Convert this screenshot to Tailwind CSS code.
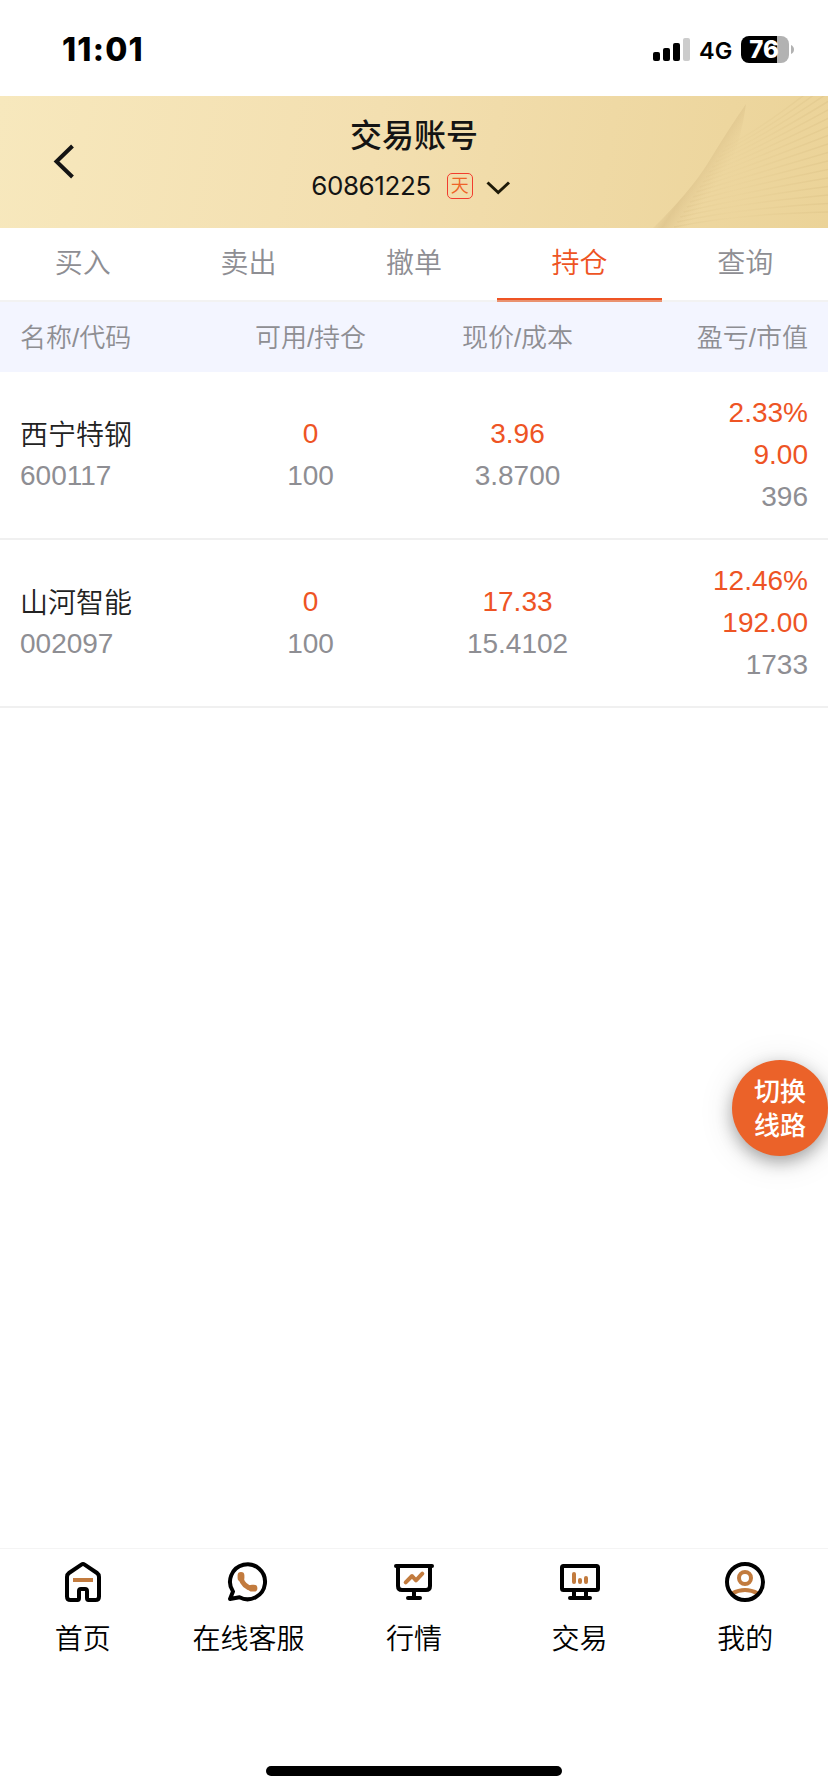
<!DOCTYPE html>
<html lang="zh-CN">
<head>
    <meta charset="UTF-8">
    <meta name="viewport" content="width=device-width, initial-scale=1.0">
    <title>交易账号</title>
    <script src="https://cdn.jsdelivr.net/npm/@tailwindcss/browser@4"></script>
</head>
<body class="bg-white">
<div class="relative flex flex-col w-[828px] h-[1792px] overflow-hidden bg-white text-[28px] leading-[42px] font-[350] text-[#8e8e93] font-['Liberation_Sans','Noto_Sans_CJK_SC',sans-serif]">

    <!-- status bar -->
    <div class="flex items-start justify-between h-24 shrink-0 pl-[62px] pr-[34px] text-black font-['Inter',sans-serif]">
        <span class="mt-[30px] text-[32px] leading-10 font-extrabold tracking-[1.2px]">11:01</span>
        <div class="flex items-center h-[27px] mt-9">
            <svg class="w-[37px] h-[23px]" viewBox="0 0 37 23">
                <rect x="0" y="14" width="7" height="9" rx="2"/>
                <rect x="10" y="10" width="7" height="13" rx="2"/>
                <rect x="20" y="5" width="7" height="18" rx="2"/>
                <rect x="30" y="0" width="7" height="23" rx="2" fill="#ccc"/>
            </svg>
            <span class="w-[33px] ml-[9px] mt-0.5 text-[23.5px] leading-7 font-semibold whitespace-nowrap">4G</span>
            <div class="flex items-center justify-center w-12 h-[27px] ml-[9px] rounded-lg bg-linear-to-r from-black from-75% to-[#b2b2b2] to-75% text-white text-2xl leading-[27px] font-extrabold pr-0.5">76</div>
            <svg class="w-[3px] h-[9px] ml-0.5" viewBox="0 0 3 9"><path d="M0 0Q3 1.5 3 4.500T0 9z" fill="#b2b2b2"/></svg>
        </div>
    </div>

    <!-- account header -->
    <header class="relative h-[132px] shrink-0 bg-linear-[100deg] from-[#f7e8bd] via-[#f3dfb0] via-45% to-[#ebd398] text-[#141414]">
        <svg class="absolute inset-0 w-full h-full" viewBox="0 0 828 132" fill="none">
            <defs>
                <linearGradient id="fold" x1="688" y1="58" x2="722" y2="80" gradientUnits="userSpaceOnUse">
                    <stop offset="0.15" stop-color="#d2b780" stop-opacity="0"/>
                    <stop offset="0.45" stop-color="#cdb17a" stop-opacity=".38"/>
                    <stop offset="1" stop-color="#e2c68c" stop-opacity="0"/>
                </linearGradient>
                <linearGradient id="ray" x1="670" y1="0" x2="828" y2="0" gradientUnits="userSpaceOnUse">
                    <stop offset="0" stop-color="#d3b87c" stop-opacity=".25"/>
                    <stop offset=".4" stop-color="#d8bd80" stop-opacity=".06"/>
                    <stop offset="1" stop-color="#d3b87c" stop-opacity=".3"/>
                </linearGradient>
            </defs>
            <path d="M746 8Q728 34 708 67Q690 96 653 132H700Q738 70 746 8z" fill="url(#fold)"/>
            <g id="rays" stroke="url(#ray)" stroke-width="1.500"></g>
        </svg>
        <svg class="absolute left-[52px] top-[46px] w-6 h-10" viewBox="0 0 24 40" fill="none" stroke="#141414" stroke-width="4"><path d="M20.500 4 4.500 19.500 20.500 35"/></svg>
        <div class="relative flex flex-col items-center pt-4">
            <h1 class="text-[32px] leading-[48px] font-medium">交易账号</h1>
            <div class="flex items-center mt-[5px] h-[42px] mr-[7px]">
                <span class="text-[26px] font-normal font-['Inter',sans-serif] tracking-[-0.4px]">60861225</span>
                <span class="flex items-center justify-center w-[26px] h-[26px] ml-4 rounded-[5px] border border-[#f23c2e] text-[18px] leading-none text-[#ee6328]">天</span>
                <svg class="w-6 h-4 ml-[13px] mt-1" viewBox="0 0 24 16" fill="none" stroke="#1e1a08" stroke-width="3"><path d="M1.500 2.500 12.200 12.500 23 2.500"/></svg>
            </div>
        </div>
    </header>

    <!-- tabs -->
    <nav class="grid grid-cols-5 h-[74px] shrink-0 border-b-2 border-[#f2f2f2] text-center leading-[72px]">
        <a>买入</a>
        <a>卖出</a>
        <a>撤单</a>
        <a class="relative text-[#ee5424]">持仓<i class="absolute left-0 -bottom-0.5 w-full h-1 bg-[#ee5424] border-b-2 border-[#ea9270]"></i></a>
        <a>查询</a>
    </nav>

    <!-- positions -->
    <div class="grid grid-cols-4 items-center h-[70px] shrink-0 pt-px bg-[#f3f5ff] text-[26px]">
        <span class="pl-5">名称/代码</span>
        <span class="text-center">可用/持仓</span>
        <span class="text-center">现价/成本</span>
        <span class="pr-5 text-right">盈亏/市值</span>
    </div>
    <div class="grid grid-cols-4 items-center h-[168px] shrink-0 border-b-2 border-[#f0f0f0]">
        <div class="pl-5"><p class="pt-0.5 -mb-0.5 text-[#222]">西宁特钢</p><p>600117</p></div>
        <div class="text-center"><p class="text-[#ee5424]">0</p><p>100</p></div>
        <div class="text-center"><p class="text-[#ee5424]">3.96</p><p>3.8700</p></div>
        <div class="pr-5 text-right"><p class="text-[#ee5424]">2.33%</p><p class="text-[#ee5424]">9.00</p><p>396</p></div>
    </div>
    <div class="grid grid-cols-4 items-center h-[168px] shrink-0 border-b-2 border-[#f0f0f0]">
        <div class="pl-5"><p class="pt-0.5 -mb-0.5 text-[#222]">山河智能</p><p>002097</p></div>
        <div class="text-center"><p class="text-[#ee5424]">0</p><p>100</p></div>
        <div class="text-center"><p class="text-[#ee5424]">17.33</p><p>15.4102</p></div>
        <div class="pr-5 text-right"><p class="text-[#ee5424]">12.46%</p><p class="text-[#ee5424]">192.00</p><p>1733</p></div>
    </div>

    <!-- floating line switch -->
    <button class="absolute right-0 top-[1060px] flex flex-col items-center justify-center w-24 h-24 pt-0.5 rounded-full bg-[#eb6229] text-white text-[26px] leading-[34px] font-medium shadow-[0_6px_16px_rgba(0,0,0,0.3),0_4px_36px_rgba(0,0,0,0.12)]">
        <span>切换</span>
        <span>线路</span>
    </button>

    <!-- bottom bar -->
    <footer class="grid grid-cols-5 h-[244px] shrink-0 mt-auto pt-[9px] border-t border-[#f4f4f4] text-black text-center">
        <div class="flex flex-col items-center">
            <svg class="w-12 h-12" viewBox="0 0 48 48" fill="none" stroke="#000" stroke-width="4" stroke-linejoin="round">
                <path d="M22.400 6.600 10 15Q8 16.400 8 19V38.500Q8 42 11.500 42H18.500Q20 42 20 40V33Q20 31 22 31H26Q28 31 28 33V40Q28 42 29.500 42H36.500Q40 42 40 38.500V19Q40 16.400 38 15L25.600 6.600Q24 5.500 22.400 6.600z"/>
                <path d="M14 22H34" stroke="#c27b3e"/>
            </svg>
            <span class="mt-[13px]">首页</span>
        </div>
        <div class="flex flex-col items-center">
            <svg class="w-12 h-12" viewBox="0 0 48 48" fill="none" stroke="#000" stroke-width="4" stroke-linecap="round" stroke-linejoin="round">
                <path d="M9 33.500A17.500 17.500 0 1 1 15.500 39.300L6 41z"/>
                <g stroke="#c27b3e">
                    <path d="M16.800 17.200V20Q19.500 29 28 30.500H30" stroke-width="5"/>
                    <path d="M17 17.500V20M28 30.200H30" stroke-width="6.800"/>
                </g>
            </svg>
            <span class="mt-[13px]">在线客服</span>
        </div>
        <div class="flex flex-col items-center">
            <svg class="w-12 h-12" viewBox="0 0 48 48" fill="none" stroke="#000" stroke-width="4" stroke-linecap="round" stroke-linejoin="round">
                <path d="M6 8H42M8 8V28Q8 32 12 32H36Q40 32 40 28V8M24 32V40M18 40H30"/>
                <path d="M15.700 24.300 22 18 26 22.300 32.300 15.700" stroke="#c27b3e"/>
            </svg>
            <span class="mt-[13px]">行情</span>
        </div>
        <div class="flex flex-col items-center">
            <svg class="w-12 h-12" viewBox="0 0 48 48" fill="none" stroke="#000" stroke-width="4" stroke-linecap="round" stroke-linejoin="round">
                <rect x="6" y="8" width="36" height="24" rx="1.500"/>
                <path d="M18 32V40M30 32V40M14 40H34"/>
                <path d="M18 16V24M24 22V24M30 20V24" stroke="#c27b3e"/>
            </svg>
            <span class="mt-[13px]">交易</span>
        </div>
        <div class="flex flex-col items-center">
            <svg class="w-12 h-12" viewBox="0 0 48 48" fill="none" stroke="#000" stroke-width="4">
                <path d="M11 35.500Q24 28.500 37 35.500" stroke="#c27b3e"/>
                <circle cx="24" cy="20" r="6" stroke="#c27b3e"/>
                <circle cx="24" cy="24" r="18"/>
            </svg>
            <span class="mt-[13px]">我的</span>
        </div>
    </footer>
    <div class="absolute left-[266px] bottom-4 w-[296px] h-2.5 rounded-full bg-black"></div>
</div>

<script>
// fine rays fanning out from the fold in the header
const rays = document.getElementById('rays')
for (let i = 0; i < 17; i++) {
    const line = document.createElementNS('http://www.w3.org/2000/svg', 'path')
    line.setAttribute('d', `M${674 + i * 3.2} ${131 - i * 5}Q${735 + i * 2} ${118 - i * 5.500} 828 ${124 - i * 8.500 - 8}`)
    rays.appendChild(line)
}
</script>
</body>
</html>
